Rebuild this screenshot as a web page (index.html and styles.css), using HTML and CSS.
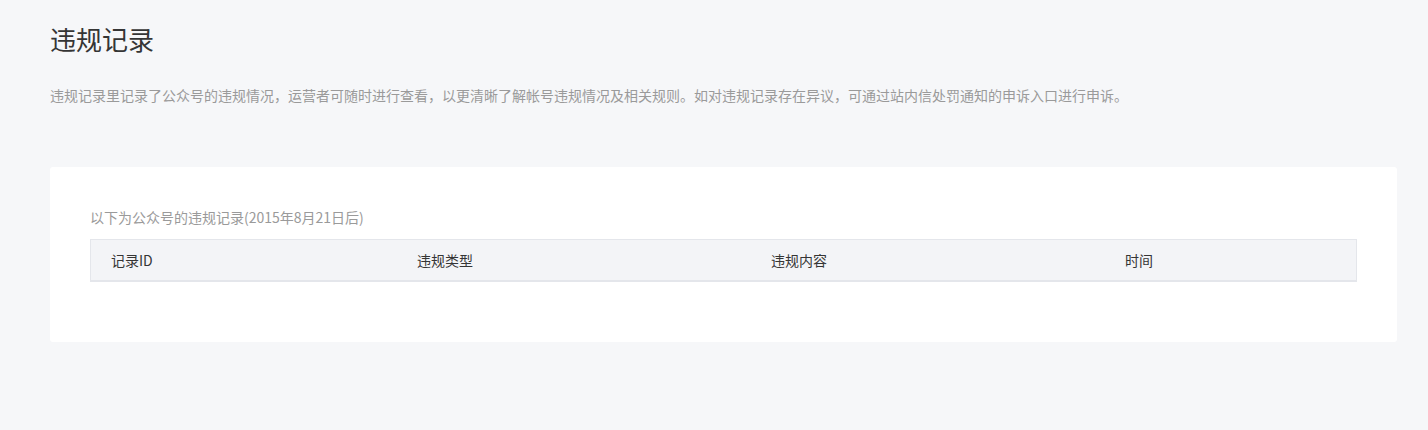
FILE: index.html
```html
<!DOCTYPE html>
<html lang="zh-CN">
<head>
<meta charset="utf-8">
<title>违规记录</title>
<link rel="stylesheet" href="styles.css">
</head>
<body>
<div class="page">
  <h2 class="title">违规记录</h2>
  <p class="desc">违规记录里记录了公众号的违规情况，运营者可随时进行查看，以更清晰了解帐号违规情况及相关规则。如对违规记录存在异议，可通过站内信处罚通知的申诉入口进行申诉。</p>
  <div class="card">
    <p class="caption">以下为公众号的违规记录(2015年8月21日后)</p>
    <div class="table">
      <div class="thead">
        <div class="th">记录ID</div>
        <div class="th">违规类型</div>
        <div class="th">违规内容</div>
        <div class="th">时间</div>
      </div>
    </div>
  </div>
</div>
</body>
</html>
```

FILE: styles.css
```css
html, body {
  margin: 0;
  padding: 0;
  background: #f6f7f9;
}
body {
  font-family: "Noto Sans CJK SC", "Noto Sans", sans-serif;
  color: #353535;
}
.page {
  padding: 21px 31px 0 50px;
}
.title {
  margin: 0;
  font-size: 26px;
  line-height: 36px;
  font-weight: normal;
  color: #353535;
}
.desc {
  margin: 28px 0 0;
  font-size: 14px;
  line-height: 20px;
  color: #9a9a9a;
}
.card {
  margin-top: 62px;
  background: #fff;
  border-radius: 3px;
  padding: 40px 40px 60px;
}
.caption {
  margin: 0 0 12px;
  font-size: 14px;
  line-height: 20px;
  color: #9a9a9a;
}
.table {
  border: 1px solid #e4e6eb;
  border-bottom-width: 2px;
  background: #f3f4f7;
}
.thead {
  display: grid;
  grid-template-columns: 306px 354px 354px 1fr;
  height: 40px;
  align-items: center;
}
.th {
  padding-left: 20px;
  font-size: 14px;
  line-height: 20px;
  color: #353535;
}
```
